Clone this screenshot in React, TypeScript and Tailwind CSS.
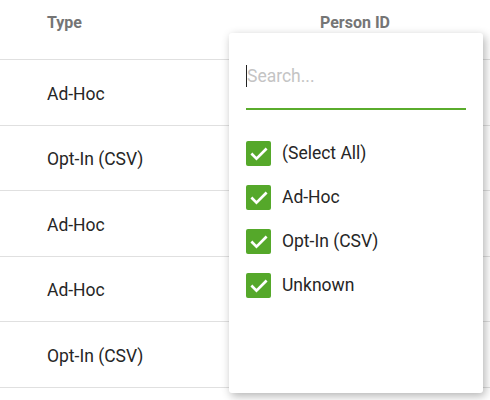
import React from "react";

const rows = ["Ad-Hoc", "Opt-In (CSV)", "Ad-Hoc", "Ad-Hoc", "Opt-In (CSV)"];
const options = ["(Select All)", "Ad-Hoc", "Opt-In (CSV)", "Unknown"];

function Check() {
  return (
    <div className="w-[25px] h-[25px] rounded-[2px] bg-[#55a82a] flex items-center justify-center shrink-0">
      <svg width="20" height="20" viewBox="0 0 24 24" fill="none">
        <path d="M4 12.5l5 5L20 6.5" stroke="white" strokeWidth="3.2" strokeLinecap="square" />
      </svg>
    </div>
  );
}

export default function App() {
  return (
    <div className="relative w-[490px] h-[400px] overflow-hidden bg-white" style={{ fontFamily: "Roboto, 'Liberation Sans', sans-serif" }}>
      <div className="flex h-[60px] items-center border-b border-[#e0e0e0] text-[16px] font-bold text-[#757575]">
        <div className="pl-[47px] w-[320px] -mt-[14px]">Type</div>
        <div className="-mt-[14px]">Person ID</div>
      </div>
      {rows.map((r, i) => (
        <div key={i} className="flex h-[65.5px] items-center border-b border-[#e0e0e0] pl-[47px] pt-[3px] text-[17.5px] text-[#262626]">
          {r}
        </div>
      ))}
      <div className="absolute left-[229px] top-[33px] w-[254px] h-[360px] bg-white rounded-[3px] shadow-[2px_3px_10px_rgba(0,0,0,0.3)] px-[17px]">
        <div className="pt-[29px] h-[77px] border-b-2 border-[#5aac2c] flex items-start">
          <div className="w-[1px] h-[22px] bg-[#222] mt-[3px]" />
          <div className="text-[17.5px] text-[#c4c4c4] leading-[28px]">Search...</div>
        </div>
        <div className="mt-[31px] flex flex-col gap-[19px]">
          {options.map((o) => (
            <div key={o} className="flex items-center gap-[11px] h-[25px] text-[17.5px] text-[#262626]">
              <Check />
              <span>{o}</span>
            </div>
          ))}
        </div>
      </div>
    </div>
  );
}
